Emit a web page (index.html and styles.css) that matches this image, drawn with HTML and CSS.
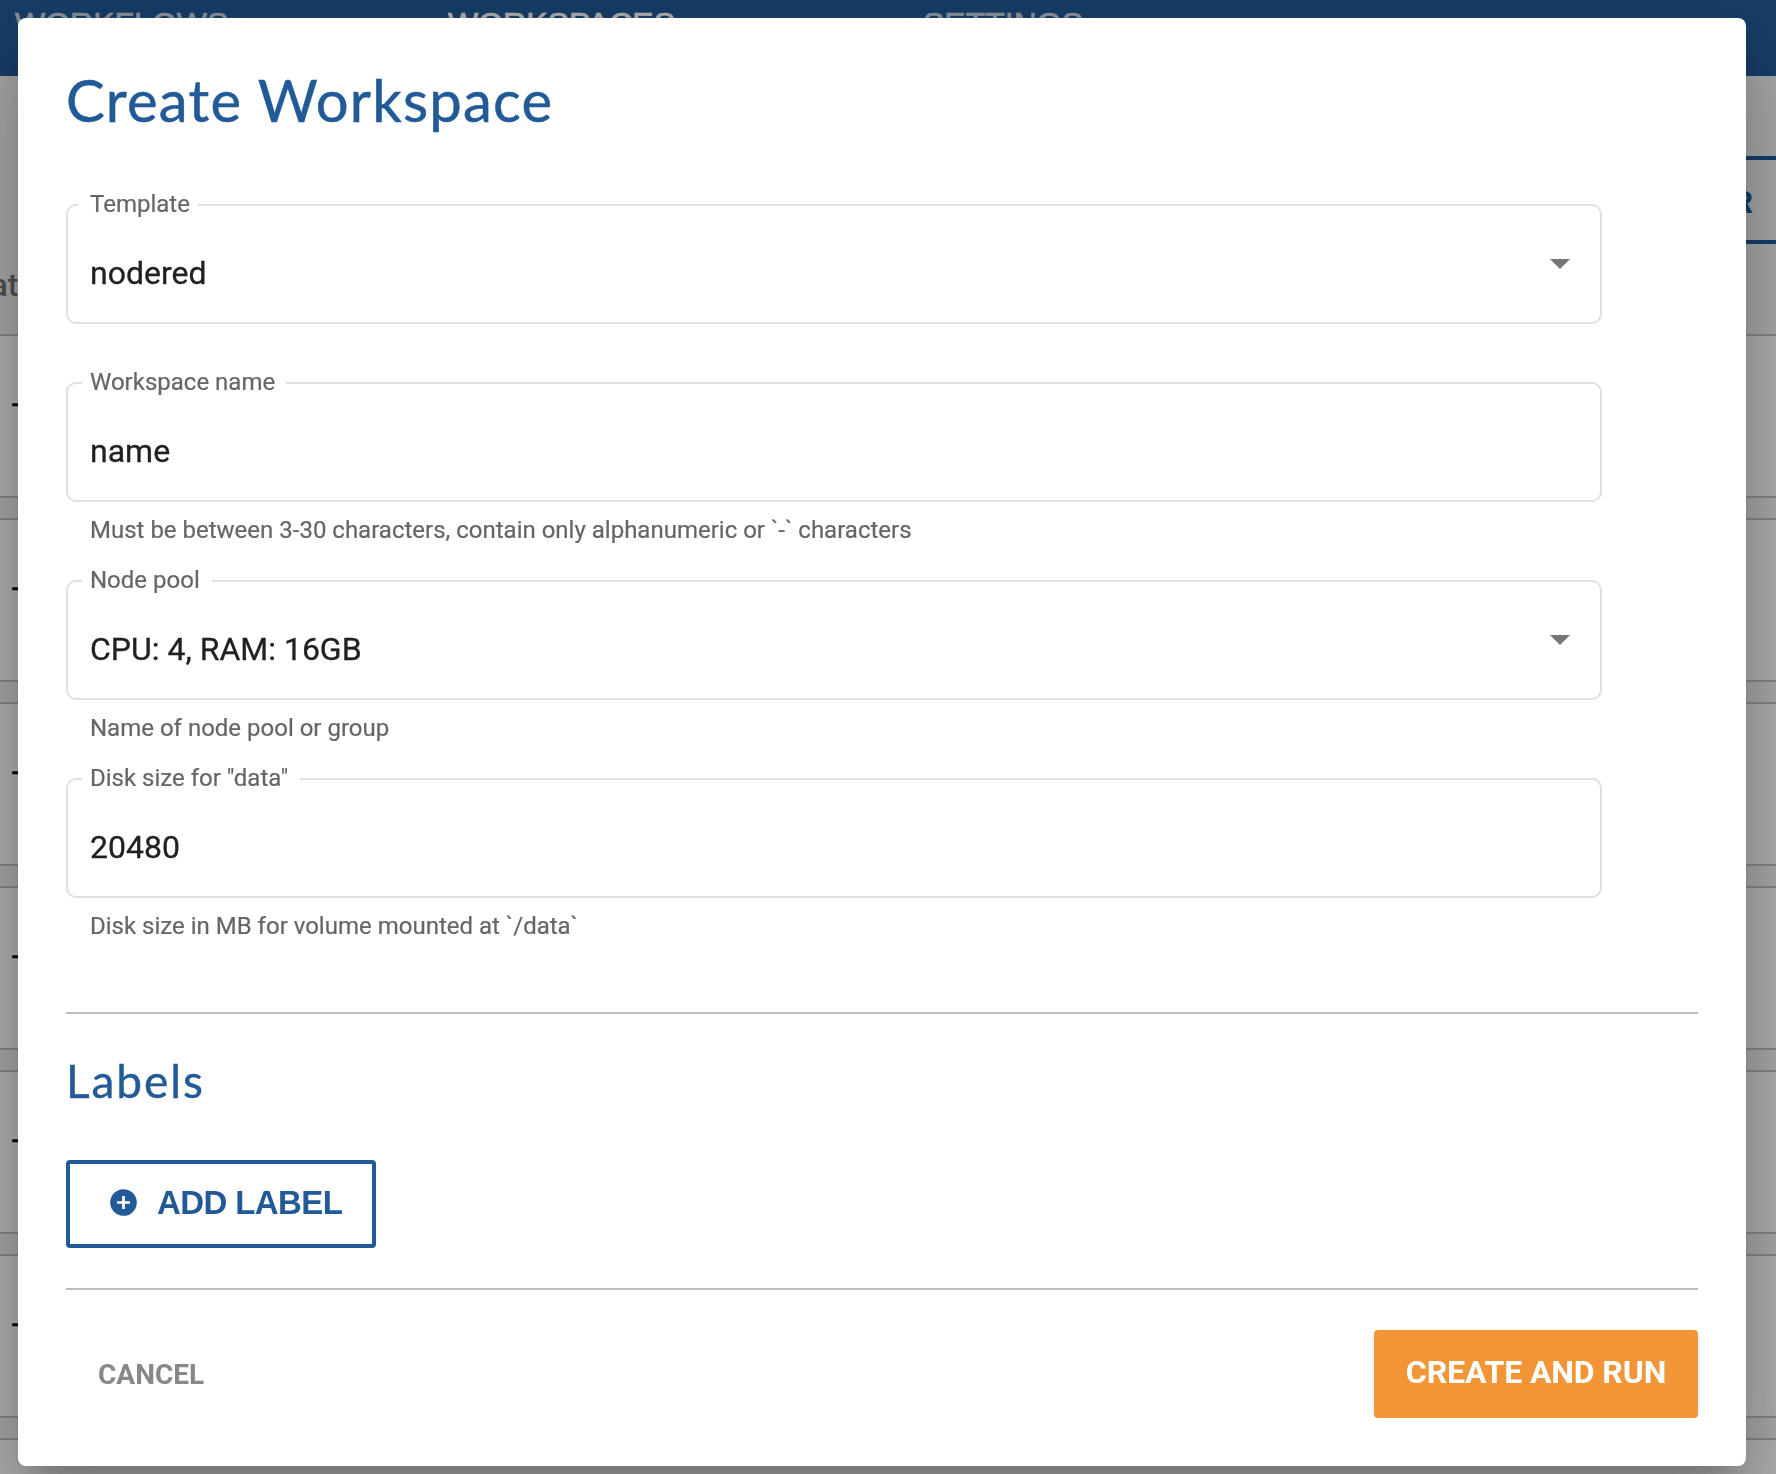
FILE: index.html
```html
<!DOCTYPE html>
<html lang="en">
<head>
<meta charset="utf-8">
<title>Create Workspace</title>
<link rel="stylesheet" href="styles.css">
</head>
<body>
<div class="page">
  <nav class="nav">
    <span class="nav-item">WORKFLOWS</span>
    <span class="nav-item nav-item-active">WORKSPACES</span>
    <span class="nav-item">SETTINGS</span>
  </nav>
  <div class="toolbar"><div class="toolbar-button">R</div></div>
  <div class="list-head">at</div>
  <div class="list">
    <div class="row">-</div>
    <div class="row">-</div>
    <div class="row">-</div>
    <div class="row">-</div>
    <div class="row">-</div>
    <div class="row">-</div>
    <div class="row"></div>
  </div>
</div>
<div class="scrim">
  <main class="dialog">
    <h1 class="title">Create Workspace</h1>
    <section class="field field-template">
      <div class="box">
        <label class="label label-template">Template</label>
        <div class="value">nodered</div>
        <svg class="arrow" viewBox="0 0 20 10"><path d="M0 0h20L10 10z"/></svg>
      </div>
    </section>
    <section class="field">
      <div class="box">
        <label class="label label-name">Workspace name</label>
        <div class="value">name</div>
      </div>
      <p class="helper">Must be between 3-30 characters, contain only alphanumeric or `-` characters</p>
    </section>
    <section class="field">
      <div class="box">
        <label class="label label-pool">Node pool</label>
        <div class="value">CPU: 4, RAM: 16GB</div>
        <svg class="arrow" viewBox="0 0 20 10"><path d="M0 0h20L10 10z"/></svg>
      </div>
      <p class="helper">Name of node pool or group</p>
    </section>
    <section class="field">
      <div class="box">
        <label class="label label-disk">Disk size for "data"</label>
        <div class="value">20480</div>
      </div>
      <p class="helper">Disk size in MB for volume mounted at `/data`</p>
    </section>
    <section class="labels">
      <h2 class="subtitle">Labels</h2>
      <button class="add">
        <svg class="add-icon" viewBox="0 0 27 27"><circle cx="13.5" cy="13.5" r="13.3" fill="#225a98"/><path d="M13.5 7v13M7 13.5h13" stroke="#fff" stroke-width="2.7"/></svg>
        <span class="add-text">ADD LABEL</span>
      </button>
    </section>
    <footer class="footer">
      <button class="cancel">CANCEL</button>
      <button class="create">CREATE AND RUN</button>
    </footer>
  </main>
</div>
</body>
</html>
```
FILE: styles.css
```css
* { box-sizing: border-box; }
body {
  margin: 0;
  height: 1474px;
  overflow: hidden;
  font-family: Roboto, sans-serif;
  background: #f2f4f7;
}
h1, h2, p { margin: 0; font-weight: 400; }
button { font-family: inherit; margin: 0; padding: 0; border: 0; background: none; }

.page { height: 1474px; overflow: hidden; }
.nav {
  height: 76px;
  padding: 6px 15px 0;
  display: grid;
  grid-template-columns: 433px 475px auto;
  background: #225a98;
  font: 32px/36px "Liberation Sans", sans-serif;
  color: #c8d5e4;
  -webkit-text-stroke: .7px currentColor;
}
.nav-item-active { color: #fff; }
.toolbar {
  height: 168px;
  padding-top: 80px;
  display: flex;
  justify-content: flex-end;
}
.toolbar-button {
  width: 240px;
  height: 88px;
  margin-right: -24px;
  padding-right: 43px;
  border: 4px solid #225a98;
  color: #225a98;
  font-weight: 700;
  font-size: 32px;
  line-height: 84px;
  text-align: right;
}
.list-head {
  height: 90px;
  padding-top: 22px;
  color: #757575;
  font-weight: 500;
  font-size: 31px;
  line-height: 40px;
  text-indent: -9px;
}
.list { display: flex; flex-direction: column; gap: 20px; }
.row {
  flex: none;
  height: 164px;
  padding: 48px 11px;
  border: solid #c4c4c4;
  border-width: 2px 0;
  background: #fff;
  color: #000;
  font: 32px/36px "Liberation Sans", sans-serif;
  -webkit-text-stroke: .4px currentColor;
}

.scrim {
  position: fixed;
  inset: 0;
  padding: 18px;
  background: rgba(0, 0, 0, .32);
}
.dialog {
  width: 1728px;
  height: 1448px;
  padding: 48px 48px 0;
  border-radius: 8px;
  background: #fff;
  box-shadow: 0 22px 30px -14px rgba(0, 0, 0, .2), 0 48px 76px 6px rgba(0, 0, 0, .14), 0 18px 92px 16px rgba(0, 0, 0, .12);
}
.title {
  height: 138px;
  color: #225a98;
  font: 58px/68px Lato, sans-serif;
  letter-spacing: 1.25px;
  -webkit-text-stroke: .5px currentColor;
}
.field { width: 1536px; height: 198px; }
.field-template { height: 178px; }
.box {
  position: relative;
  height: 120px;
  border: 2px solid #e0e0e0;
  border-radius: 10px;
}
.label {
  display: block;
  height: 28px;
  margin: -16px 0 0 14px;
  padding-left: 8px;
  background: #fff;
  color: #666;
  font-size: 24px;
  line-height: 28px;
  white-space: nowrap;
  -webkit-text-stroke: .2px currentColor;
}
.label-template { width: 120px; margin-left: 10px; padding-left: 12px; }
.label-name { width: 204px; }
.label-pool { width: 130px; }
.label-disk { width: 218px; }
.value {
  margin: 35px 22px 0;
  color: #212121;
  font-size: 32px;
  line-height: 40px;
  -webkit-text-stroke: .3px currentColor;
}
.arrow {
  position: absolute;
  right: 30px;
  top: 53px;
  width: 20px;
  height: 10px;
  fill: #757575;
}
.helper {
  padding: 13px 24px 0;
  color: #666;
  font-size: 24px;
  line-height: 30px;
  -webkit-text-stroke: .2px currentColor;
}
.labels {
  height: 278px;
  margin-top: 36px;
  border: solid #bdbdbd;
  border-width: 2px 0;
}
.subtitle {
  height: 146px;
  padding-top: 40px;
  color: #225a98;
  font: 46px/54px Lato, sans-serif;
  letter-spacing: 1.9px;
  -webkit-text-stroke: .4px currentColor;
}
.add {
  width: 310px;
  height: 88px;
  padding: 0 0 4px 40px;
  display: flex;
  align-items: center;
  gap: 20px;
  border: 4px solid #225a98;
  border-radius: 4px;
  color: #225a98;
  font: 700 33px/40px "Liberation Sans", sans-serif;
  letter-spacing: -.6px;
  white-space: nowrap;
}
.add-icon { width: 27px; height: 27px; }
.add-text { padding-top: 2px; }
.footer {
  padding-top: 40px;
  display: flex;
  justify-content: space-between;
  align-items: center;
}
.cancel {
  padding-left: 32px;
  color: #888;
  font-size: 28px;
  font-weight: 700;
}
.create {
  width: 324px;
  height: 88px;
  padding-bottom: 4px;
  border-radius: 4px;
  background: #f29537;
  color: #fff;
  font-size: 32px;
  font-weight: 700;
  letter-spacing: -.1px;
}
```
